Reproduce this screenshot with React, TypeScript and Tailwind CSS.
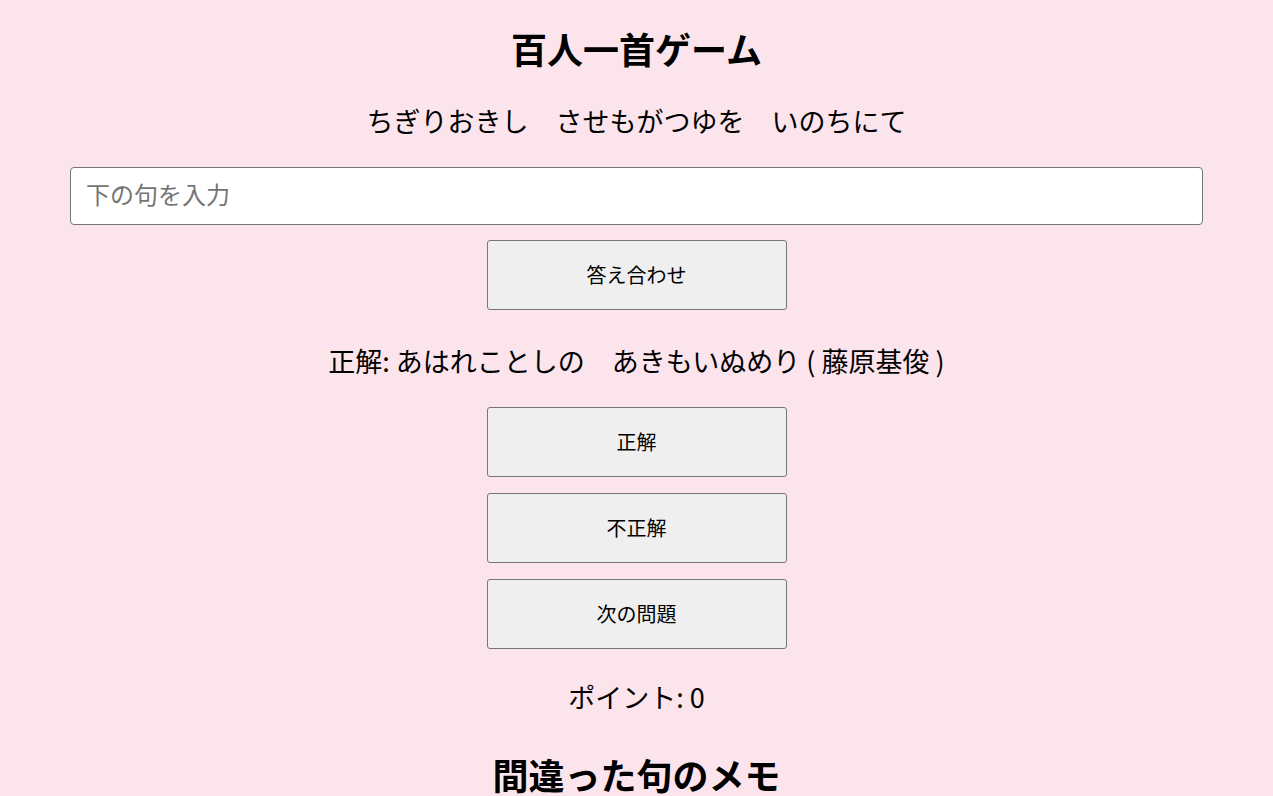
export default function App() {
  const font = { fontFamily: '"Noto Sans CJK JP", "Noto Sans", sans-serif' };
  const btn =
    "w-[300px] h-[70px] bg-[#efefef] border border-[#767676] rounded-[3px] text-[20px] text-black";
  return (
    <div className="min-h-[796px] w-full bg-[#fce4ec] text-black flex flex-col items-center" style={font}>
      <h1 className="mt-[26px] text-[36px] font-bold leading-[44px]">百人一首ゲーム</h1>
      <p className="mt-[31px] text-[27px] leading-[40px]">ちぎりおきし　させもがつゆを　いのちにて</p>
      <input
        className="mt-[26px] w-[1133px] h-[58px] bg-white border border-[#767676] rounded-[4px] pl-[15px] pr-[15px] pb-[6px] text-[24px] placeholder:text-[#757575] outline-none"
        placeholder="下の句を入力"
      />
      <button className={`${btn} mt-[15px]`}>答え合わせ</button>
      <p className="mt-[31px] text-[27px] leading-[40px]">正解: あはれことしの　あきもいぬめり ( 藤原基俊 )</p>
      <div className="mt-[26px] flex flex-col gap-[16px]">
        <button className={btn}>正解</button>
        <button className={btn}>不正解</button>
        <button className={btn}>次の問題</button>
      </div>
      <p className="mt-[28px] text-[27px] leading-[40px]">ポイント: 0</p>
      <h2 className="mt-[35px] text-[36px] font-bold leading-[44px]">間違った句のメモ</h2>
    </div>
  );
}
